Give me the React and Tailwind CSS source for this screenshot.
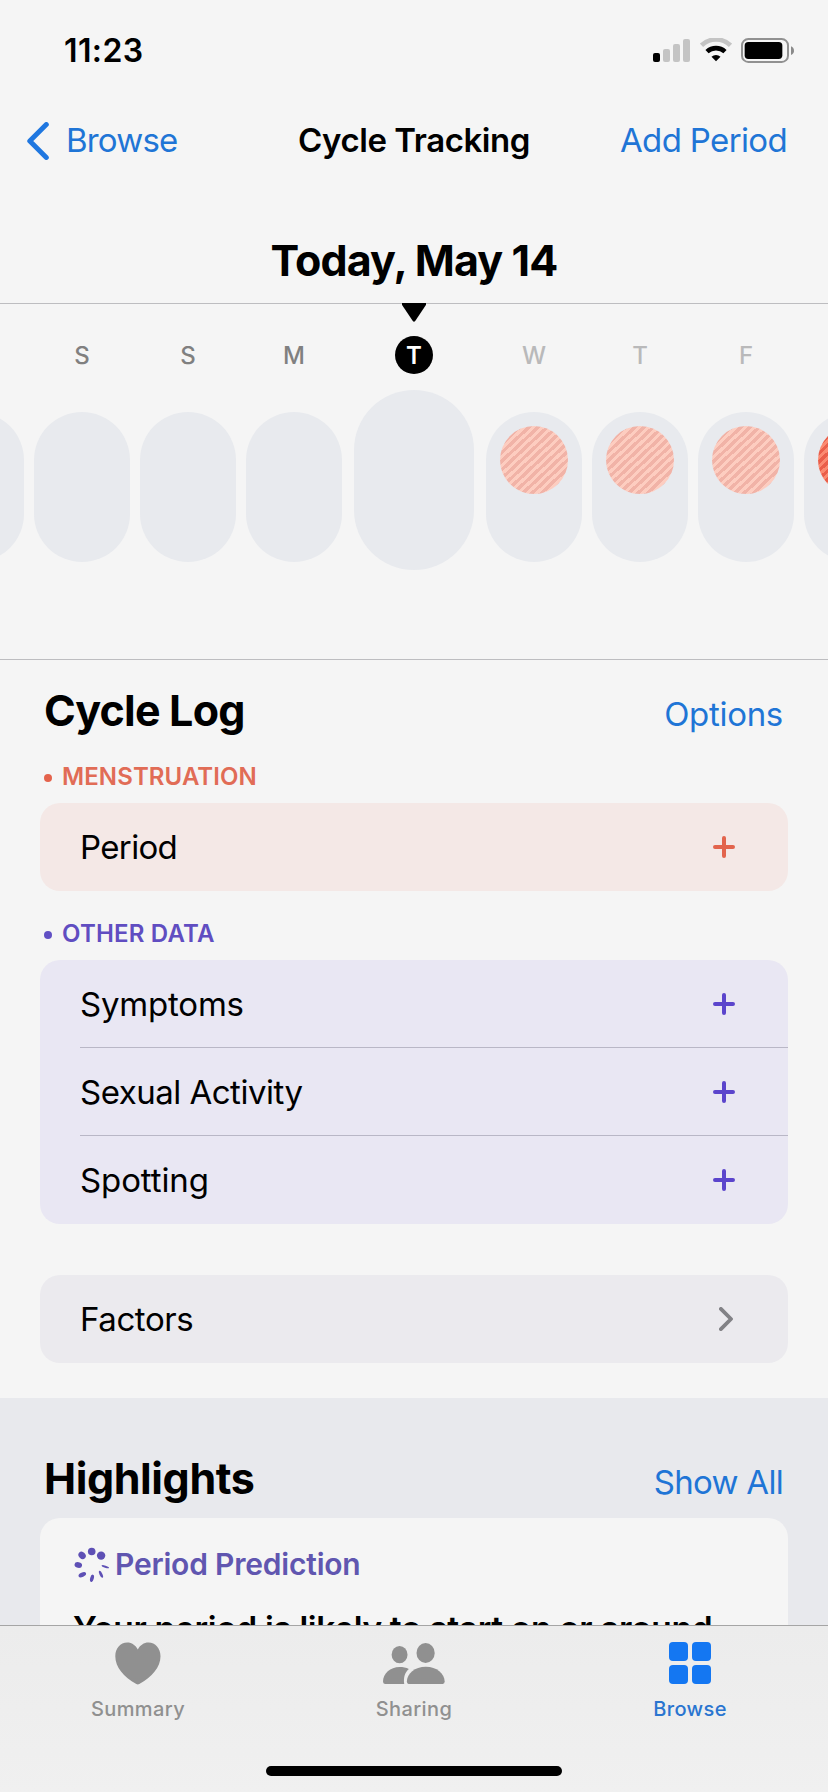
const days = [
    { letter: '', kind: 'past' },
    { letter: 'S', kind: 'past' },
    { letter: 'S', kind: 'past' },
    { letter: 'M', kind: 'past' },
    { letter: 'T', kind: 'today' },
    { letter: 'W', kind: 'future', predicted: 'light' },
    { letter: 'T', kind: 'future', predicted: 'light' },
    { letter: 'F', kind: 'future', predicted: 'light' },
    { letter: '', kind: 'future', predicted: 'strong' },
];

const otherData = [
    { name: 'Symptoms', tracking: 'tracking-[-0.2px]' },
    { name: 'Sexual Activity', tracking: 'tracking-[-0.5px]' },
    { name: 'Spotting', tracking: 'tracking-[-0.1px]' },
];

function StatusBar() {
    return (
        <div className="flex h-[100px] shrink-0 items-center justify-between pl-[64px] pr-[34px]">
            <span className="pt-px text-[32px] font-semibold tracking-[0.4px]">11:23</span>
            <div className="flex items-center gap-[9.5px]">
                <svg viewBox="0 0 111 69" className="h-[23px] w-[37px]">
                    <rect x="0" y="42" width="21" height="27" rx="6" fill="#000" />
                    <rect x="30" y="30" width="21" height="39" rx="6" fill="#c4c4c4" />
                    <rect x="60" y="15" width="21" height="54" rx="6" fill="#c4c4c4" />
                    <rect x="90" y="0" width="21" height="69" rx="6" fill="#c4c4c4" />
                </svg>
                <svg viewBox="0 0 96 70" className="h-[23.3px] w-[32px]" fill="none">
                    <path d="M4.5 22 A63 63 0 0 1 91.5 22" stroke="#c4c4c4" strokeWidth="14" />
                    <path d="M21 41 A40 40 0 0 1 75 41" stroke="#000" strokeWidth="14" />
                    <path d="M48 70 L34.5 56.5 A20 20 0 0 1 61.5 56.5 Z" fill="#000" />
                </svg>
                <svg viewBox="0 0 159 75" className="h-[25px] w-[53px]">
                    <rect x="3" y="3" width="138" height="69" rx="19" fill="none" stroke="#919191" strokeWidth="6" />
                    <rect x="11" y="12" width="113" height="51" rx="11" fill="#000" />
                    <path d="M150 25 Q159 29 159 38 Q159 47 150 51 Z" fill="#8a8a8a" />
                </svg>
            </div>
        </div>
    );
}

function NavBar() {
    return (
        <div className="grid h-[81px] shrink-0 grid-cols-[1fr_auto_1fr] items-center px-[27px] text-[33px]">
            <div className="flex items-center gap-[17px] tracking-[-0.8px] text-[#1f75d6]">
                <svg viewBox="0 0 22 38" className="h-[38px] w-[22px]" fill="none" stroke="#1f77e0" strokeWidth="5" strokeLinecap="round" strokeLinejoin="round">
                    <path d="M19.3 2.6 L2.8 19 L19.3 35.4" />
                </svg>
                <span>Browse</span>
            </div>
            <h1 className="font-semibold tracking-[-0.45px]">Cycle Tracking</h1>
            <span className="pr-3.5 text-right tracking-[-0.65px] text-[#1f75d6]">Add Period</span>
        </div>
    );
}

function Day({ day }) {
    const today = day.kind === 'today';
    return (
        <div className={today ? 'mx-0.5 flex w-[120px] shrink-0 flex-col items-center' : 'flex w-24 shrink-0 flex-col items-center'}>
            <div
                className={
                    today
                        ? 'flex size-[38px] items-center justify-center rounded-full bg-black pt-px text-[24px] font-semibold text-white'
                        : day.kind === 'past'
                          ? 'flex h-[38px] items-center pt-0.5 text-[24px] font-medium text-[#808080]'
                          : 'flex h-[38px] items-center pt-0.5 text-[24px] font-medium text-[#b9b9ba]'
                }
            >
                {day.letter}
            </div>
            <div
                className={
                    today
                        ? 'mt-4 h-[180px] w-full rounded-full bg-[#e8eaee]'
                        : 'mt-[38px] flex h-[150px] w-full justify-center rounded-full bg-[#e8eaee] pt-3.5'
                }
            >
                {day.predicted === 'light' && (
                    <div className="size-[68px] rounded-full bg-[repeating-linear-gradient(137deg,#f1b3a7_0_3.3px,#fdcdc0_3.3px_6.3px)]" />
                )}
                {day.predicted === 'strong' && (
                    <div className="size-[68px] rounded-full bg-[repeating-linear-gradient(137deg,#ea5f4a_0_3.3px,#fb8a70_3.3px_6.3px)]" />
                )}
            </div>
        </div>
    );
}

function Timeline() {
    return (
        <div className="relative flex h-[357px] shrink-0 justify-center gap-2.5 overflow-x-clip border-y border-[#bdbdc0] pt-8">
            {days.map((day, i) => (
                <Day key={i} day={day} />
            ))}
            {/* Marker above the selected day */}
            <svg viewBox="0 0 24 19" className="absolute -top-px left-[402px] h-[19px] w-6">
                <path d="M0 0 H24 Q24.5 1 23.6 2.4 L13.2 18 Q12 19.6 10.8 18 L0.4 2.4 Q-0.5 1 0 0 Z" />
            </svg>
        </div>
    );
}

function Plus({ color }) {
    return (
        <svg viewBox="0 0 22 22" className="size-[22px]" stroke={color} strokeWidth="4" strokeLinecap="round">
            <path d="M11 2 V20 M2 11 H20" />
        </svg>
    );
}

function CycleLog() {
    return (
        <section className="shrink-0 px-10 pb-[35px] pt-6">
            <div className="flex h-[52px] items-baseline justify-between pl-1 pr-[5px]">
                <h2 className="text-[43px] font-bold leading-[52px] tracking-[-0.8px]">Cycle Log</h2>
                <span className="text-[33px] leading-10 tracking-[-0.3px] text-[#1f75d6]">Options</span>
            </div>

            <div className="flex h-[67px] items-center gap-2.5 pl-1 pt-3.5 text-[#e16c56]">
                <span className="mt-0.5 size-2 rounded-full bg-[#e4634c]" />
                <h3 className="text-[24px] font-semibold tracking-[0.1px]">MENSTRUATION</h3>
            </div>
            <div className="flex h-[88px] items-center justify-between rounded-[20px] bg-[#f4e8e6] pl-10 pr-[53px]">
                <span className="pt-0.5 text-[33px] tracking-[-0.65px]">Period</span>
                <Plus color="#e2644d" />
            </div>

            <div className="flex h-[69px] items-center gap-2.5 pl-1 pt-4 text-[#604dc1]">
                <span className="mt-0.5 size-2 rounded-full bg-[#6150c4]" />
                <h3 className="text-[24px] font-semibold tracking-[0.2px]">OTHER DATA</h3>
            </div>
            <div className="rounded-[20px] bg-[#e9e7f3] pl-10">
                {otherData.map(({ name, tracking }) => (
                    <div key={name} className="flex h-[88px] items-center justify-between border-b border-[#b9b7c6] pr-[53px] last:border-transparent">
                        <span className={`pt-0.5 text-[33px] ${tracking}`}>{name}</span>
                        <Plus color="#5b45cc" />
                    </div>
                ))}
            </div>

            <div className="mt-[51px] flex h-[88px] items-center justify-between rounded-[20px] bg-[#ebeaee] pl-10 pr-[55px]">
                <span className="pt-0.5 text-[33px] tracking-[-0.4px]">Factors</span>
                <svg viewBox="0 0 14 24" className="h-6 w-3.5" fill="none" stroke="#828286" strokeWidth="3.8" strokeLinecap="round" strokeLinejoin="round">
                    <path d="M1.9 1.9 L12 12 L1.9 22.1" />
                </svg>
            </div>
        </section>
    );
}

function PredictionIcon() {
    return (
        <svg viewBox="0 0 35 35" className="size-[35px]" fill="#5e50b5">
            <circle cx="17.7" cy="4.5" r="3.8" />
            <circle cx="27.1" cy="8.6" r="4.2" />
            <ellipse cx="31.3" cy="19.7" rx="3.9" ry="1" transform="rotate(18 31.3 19.7)" />
            <ellipse cx="27" cy="27.3" rx="1.4" ry="3.8" transform="rotate(-25 27 27.3)" />
            <ellipse cx="18" cy="31.3" rx="1.8" ry="3.8" transform="rotate(15 18 31.3)" />
            <ellipse cx="8.3" cy="27.8" rx="4" ry="2.2" transform="rotate(-25 8.3 27.8)" />
            <ellipse cx="4.3" cy="18" rx="3.8" ry="2.8" transform="rotate(10 4.3 18)" />
            <ellipse cx="8.1" cy="8.3" rx="4" ry="3.3" transform="rotate(45 8.1 8.3)" />
        </svg>
    );
}

function Highlights() {
    return (
        <section className="shrink-0 bg-[#e8e9ed] px-10 pt-[54px]">
            <div className="flex h-[52px] items-baseline justify-between pl-1 pr-[5px]">
                <h2 className="text-[43px] font-bold leading-[52px] tracking-[-0.4px]">Highlights</h2>
                <span className="text-[33px] leading-10 tracking-[-0.7px] text-[#1f75d6]">Show All</span>
            </div>
            <div className="mt-3.5 h-[300px] rounded-[20px] bg-[#f5f5f5] px-[33px] pt-6">
                <div className="flex h-[45px] items-center gap-[6px] pl-px">
                    <PredictionIcon />
                    <span className="text-[30px] font-semibold tracking-[-0.2px] text-[#6056b0]">Period Prediction</span>
                </div>
                <p className="mt-5 whitespace-nowrap text-[33.5px] font-semibold leading-[44px] tracking-[-0.35px]">
                    Your period is likely to start on or around
                </p>
            </div>
        </section>
    );
}

function TabBar() {
    return (
        <nav className="h-[167px] shrink-0 border-t border-[#a5a5a5] bg-linear-to-b from-[#ececec] to-[#f0f0f0] text-[20px] font-medium tracking-[0.4px] text-[#909090]">
            <div className="grid h-[140px] grid-cols-3">
                <div className="flex flex-col items-center pt-4">
                    <svg viewBox="0 0 46 43" className="h-[43px] w-[46px]" fill="#909090">
                        <path d="M22.8 7.5 C20.6 3.2 16.8 0.5 12.3 0.5 C5.3 0.5 0.3 6.4 0.3 14.2 C0.3 25 8.6 34.8 21.3 42 Q22.8 42.8 24.3 42 C37 34.8 45.5 25 45.5 14.2 C45.5 6.4 40.4 0.5 33.5 0.5 C28.9 0.5 25 3.2 22.8 7.5 Z" />
                    </svg>
                    <span className="mt-3 leading-6">Summary</span>
                </div>
                <div className="flex flex-col items-center pt-4">
                    <svg viewBox="0 0 187 129" className="h-[43px] w-[62px]" fill="#909090">
                        <ellipse cx="50" cy="38" rx="24" ry="26" />
                        <ellipse cx="128.5" cy="33" rx="27.5" ry="30" />
                        <path d="M6 126 Q0 126 0 119 C0 95 22 75 50 75 C60 75 70 77 78 81 C67 90 61 106 64 126 Z" />
                        <path d="M77 126 Q72 126 72 119 C72 95 96 74 129 74 C162 74 186 95 186 119 Q186 126 180 126 Z" />
                    </svg>
                    <span className="mt-3 leading-6">Sharing</span>
                </div>
                <div className="flex flex-col items-center pt-4 text-[#2a75d0]">
                    <div className="grid h-[43px] grid-cols-[19px_19px] grid-rows-[19px_19px] gap-1">
                        <span className="rounded-[4px] bg-[#1477f2]" />
                        <span className="rounded-[4px] bg-[#1477f2]" />
                        <span className="rounded-[4px] bg-[#1477f2]" />
                        <span className="rounded-[4px] bg-[#1477f2]" />
                    </div>
                    <span className="mt-3 leading-6">Browse</span>
                </div>
            </div>
            {/* Home indicator */}
            <div className="mx-auto h-2.5 w-[296px] rounded-full bg-black" />
        </nav>
    );
}

export default function App() {
    return (
        <div className="flex h-[1792px] w-[828px] flex-col overflow-hidden bg-[#f5f5f5] font-['Inter','Liberation_Sans',sans-serif] text-black">
            <main className="flex min-h-0 flex-1 flex-col overflow-hidden">
                <StatusBar />
                <NavBar />
                <h2 className="flex h-[122px] shrink-0 items-center justify-center pt-9 text-[43px] font-bold tracking-[-0.9px]">
                    Today, May 14
                </h2>
                <Timeline />
                <CycleLog />
                <Highlights />
            </main>
            <TabBar />
        </div>
    );
}
